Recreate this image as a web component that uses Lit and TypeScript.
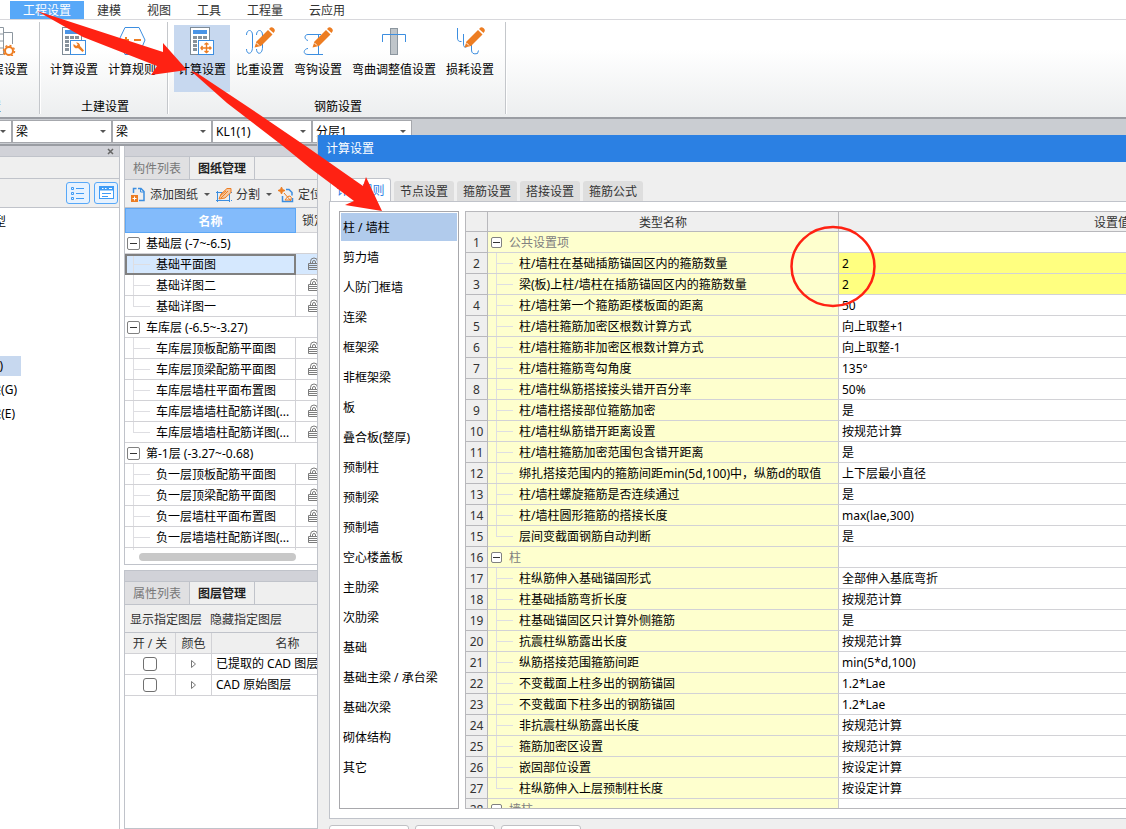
import { LitElement, html, css, svg } from "lit";
import { customElement } from "lit/decorators.js";

const shared = css`
  * { box-sizing: border-box; }
  button, select, input { font: inherit; color: inherit; margin: 0; }
  button { border: 0; background: none; padding: 0; white-space: nowrap; cursor: pointer; }
  svg { display: block; flex: none; }
`;

const pencil = svg`<path d="M9.500 21.500l2-6L23 4l4.500 4.500L16 20z" fill="#ed7d22"/><path d="M24 3l1.500-1.500q1.500-.8 3.200.8t.8 3.200L28.500 7z" fill="#ed7d22"/><path d="M11.500 17l2.500 2.500" stroke="#fff"/>`;
const sheetCalc = (extra: unknown) => html`
  <svg width="28" height="30" viewBox="0 0 28 30" fill="none">
    <rect x="2.500" y="1.500" width="19" height="27" fill="#fff" stroke="#7e8b97"/>
    <rect x="5" y="4" width="14" height="4" fill="#4a94e6"/>
    <path d="M5 11.500h14M5 15.500h14M5 19.500h4M5 23.500h4" stroke="#86919b" stroke-width="3" stroke-dasharray="4 1"/>
    <rect x="10.500" y="14.500" width="15" height="14" fill="#fff" stroke="#3c8ee0"/>
    ${extra}
  </svg>`;
const wrench = svg`<path d="M13.500 18a3.300 3.300 0 0 0 4.500 4l4.500 4 1.500-1.500-4-4.500a3.300 3.300 0 0 0-4-3.500l1.800 2-1.500 1.500z" fill="#ed7d22"/>`;
const cross = svg`<path d="M18.500 17.500v8.500M13.500 22h9M16.500 18.500l2-1.500 2 1.500M14.500 20l-1.500 2 1.500 2M21.500 20.500l1.500 1.500-1.500 1.500M16.500 25l2 1.500 2-1.500" stroke="#ed7d22" stroke-width="1.400"/>`;

const icons: Record<string, unknown> = {
  floor: html`<svg width="28" height="30" viewBox="0 0 28 30" fill="none">
    <path d="M0 1.500h13.500v27H0M0 8h13M0 15h13M0 22h13M13.500 6.500h9V18" stroke="#8c969f"/>
    <circle cx="19" cy="25" r="4" fill="#fff" stroke="#ed7d22" stroke-width="2"/>
    <circle cx="19" cy="25" r="5.500" stroke="#ed7d22" stroke-width="1.500" stroke-dasharray="2 2.300"/></svg>`,
  calc: sheetCalc(wrench),
  calcCross: sheetCalc(cross),
  rule: html`<svg width="28" height="30" viewBox="0 0 28 30" fill="none">
    <path d="M7 1.500h14l6 12.500-6 14.500H7L1 14z" stroke="#3c8ee0" fill="#fff"/>
    <path d="M5 14h6M8 11v6M16 14h7" stroke="#ed7d22" stroke-width="2"/></svg>`,
  weight: html`<svg width="30" height="30" viewBox="0 0 30 30" fill="none">
    <path d="M1.500 9c0-6 6-6 6 0v12c0 8-6 8-6 2M11.500 9c0-6 6-6 6 0v12c0 8-6 8-6 2" stroke="#3c8ee0"/>${pencil}</svg>`,
  hook: html`<svg width="30" height="30" viewBox="0 0 30 30" fill="none">
    <path d="M18 8.500H5c-4 0-4 5 0 6M18 28.500H5c-6 0-4-6 0-6M15.500 9v19M12 28.500h8" stroke="#3c8ee0"/>${pencil}</svg>`,
  bend: html`<svg width="28" height="30" viewBox="0 0 28 30" fill="none">
    <rect x="10.500" y="2.500" width="7" height="26" fill="#bfc5ca" stroke="#8c969f"/>
    <path d="M2.500 16V8.500h23V16" stroke="#3c8ee0"/></svg>`,
  loss: html`<svg width="30" height="30" viewBox="0 0 30 30" fill="none">
    <path d="M2.500 2v10q0 4 4 3.500M8.500 8v10q0 4 3 3M16.500 15v9q0 5 6 3.500l1-3" stroke="#3c8ee0"/>${pencil}</svg>`,
};

interface Tool { label: string; icon: string; on?: boolean }
const ribbon: { name: string; tools: Tool[] }[] = [
  { name: "工程设置", tools: [{ label: "楼层设置", icon: "floor" }] },
  { name: "土建设置", tools: [{ label: "计算设置", icon: "calc" }, { label: "计算规则", icon: "rule" }] },
  { name: "钢筋设置", tools: [
    { label: "计算设置", icon: "calcCross", on: true },
    { label: "比重设置", icon: "weight" },
    { label: "弯钩设置", icon: "hook" },
    { label: "弯曲调整值设置", icon: "bend" },
    { label: "损耗设置", icon: "loss" },
  ] },
];

@customElement("app-ribbon")
export class AppRibbon extends LitElement {
  static styles = [shared, css`
    :host { display: block; }
    .tabs { display: flex; height: 20px; padding: 1px 0 0 10px; border-bottom: 1px solid #d8d8dc; }
    .tab { padding: 2px 13px 0; height: 18px; line-height: 16px; color: #333; }
    .tab.on { background: #57a8f8; color: #fff; }
    .groups { display: flex; height: 99px; background: linear-gradient(#fff 30%, #eceeef); border-bottom: 2px solid #9a9da3; overflow: hidden; }
    .group { display: flex; flex-direction: column; align-items: center; gap: 6px; margin: 2px 1px 3px 0; padding: 3px 7px 0 5px; border-right: 1px solid #c4c7cb; box-shadow: 1px 0 #fff; }
    .group:first-child { width: 40px; padding: 3px 7px 0 0; align-items: flex-end; }
    .group:first-child .name { padding-right: 31px; }
    .tools { display: flex; gap: 2px; }
    .tool { display: flex; flex-direction: column; align-items: center; height: 67px; padding: 1px 4px; color: #000; }
    .tool.on { background: #c7d8ef; }
    .label { line-height: 20px; margin-top: 4px; }
    .name { line-height: 18px; white-space: nowrap; padding-left: 4px; }
  `];
  render() {
    return html`
      <nav class="tabs">
        ${["工程设置", "建模", "视图", "工具", "工程量", "云应用"].map((t, i) =>
          html`<button class="tab ${i ? "" : "on"}">${t}</button>`)}
      </nav>
      <div class="groups">
        ${ribbon.map(g => html`<section class="group">
          <div class="tools">${g.tools.map(t => html`
            <button class="tool ${t.on ? "on" : ""}">${icons[t.icon]}<span class="label">${t.label}</span></button>`)}
          </div>
          <span class="name">${g.name}</span>
        </section>`)}
      </div>`;
  }
}

const addIcon = html`<svg width="16" height="16" viewBox="0 0 16 16" fill="none">
  <path d="M3.500 6V1.500h3M8 1.500h3l3 3v9H9" stroke="#3c8ee0" stroke-width="1.500"/><path d="M10.500 1v4H14" stroke="#3c8ee0"/>
  <rect x="1" y="8" width="7" height="7" fill="#ed7d22"/><path d="M4.500 9.500v4M2.500 11.500h4" stroke="#fff"/></svg>`;
const splitIcon = html`<svg width="16" height="16" viewBox="0 0 16 16" fill="none">
  <path d="M1.500 5.500h12v8h-12z" stroke="#3c8ee0"/><path d="M0 5.500h16M0 13.500h16M1.500 4v11M13.500 4v11" stroke="#3c8ee0" stroke-dasharray="2 1"/>
  <path d="M3 12l2-5 6-5.500h4v4L9 11z" fill="#f6c8a0" stroke="#ed7d22"/><path d="M5 11l7-7M4 9l6-5" stroke="#ed7d22"/></svg>`;
const locateIcon = html`<svg width="16" height="16" viewBox="0 0 16 16" fill="none">
  <path d="M8 2.500h3l3 3v3M4.500 9v5.500h10V11" stroke="#3c8ee0" stroke-width="1.500"/>
  <path d="M3.500 0l1 2.500L7 3.500l-2.500 1-1 2.500-1-2.500L0 3.500l2.500-1z" fill="#ed7d22" stroke="#ed7d22"/><path d="M6 6l7 8M7 13q3-5 5-4t1 4H7" stroke="#ed7d22"/></svg>`;
const lockIcon = html`<svg width="12" height="14" viewBox="0 0 12 14" fill="none" stroke="#7c7c7c">
  <path d="M2.500 6V4.500a3.500 3.500 0 0 1 7 0V6M4.500 6V5a1.500 1.500 0 0 1 3 0v1M.500 6.500h11v6H.500zM1 8.500h10M1 10.500h10"/></svg>`;

const drawings = [
  { name: "基础层 (-7~-6.5)", items: ["基础平面图", "基础详图二", "基础详图一"] },
  { name: "车库层 (-6.5~-3.27)", items: ["车库层顶板配筋平面图", "车库层顶梁配筋平面图", "车库层墙柱平面布置图", "车库层墙墙柱配筋详图(...", "车库层墙墙柱配筋详图(..."] },
  { name: "第-1层 (-3.27~-0.68)", items: ["负一层顶板配筋平面图", "负一层顶梁配筋平面图", "负一层墙柱平面布置图", "负一层墙墙柱配筋详图(...", "负一层墙墙柱配筋详图(..."] },
];

const tree = css`
  .box { width: 13px; height: 13px; border: 1px solid #808080; border-radius: 2px; background: linear-gradient(#333, #333) center / 7px 1px no-repeat #fff; flex: none; }
  .twig { align-self: stretch; flex: none; width: 17px; background:
    linear-gradient(#dedee2, #dedee2) 0 0 / 1px 100% no-repeat,
    linear-gradient(#dedee2, #dedee2) 0 10px / 17px 1px no-repeat; }
  .twig.end { background-size: 1px 11px, 17px 1px; }
  .txt { padding-top: 1px; }
`;

@customElement("drawing-dock")
export class DrawingDock extends LitElement {
  static styles = [shared, tree, css`
    :host { display: flex; flex-direction: column; gap: 5px; width: 240px; flex: none; }
    .pane { border-left: 1px solid #c0c3ca; border-bottom: 1px solid #c0c3ca; background: #fff; }
    .pane.rest { flex: 1; border-top: 1px solid #c0c3ca; }
    .grip { height: 11px; background: #d1d2d8; border-bottom: 1px solid #c0c3ca; }
    .tabs { display: flex; height: 23px; background: #efefef; border-bottom: 1px solid #c0c3ca; }
    .tab { width: 65px; color: #777; background: #e0e0e2; border-right: 1px solid #c0c3ca; line-height: 22px; padding-top: 1px; }
    .tab.on { background: #efefef; color: #222; font-weight: 600; }
    .bar { display: flex; align-items: center; height: 28px; background: #efefef; gap: 4px; padding: 2px 5px 0; color: #333; border-bottom: 1px solid #c0c3ca; }
    .act { display: flex; align-items: center; gap: 4px; }
    .act::after { content: ""; border: 3px solid transparent; border-top-color: #555; border-bottom: 0; margin: 0 2px 0 2px; }
    .text { padding-right: 4px; }
    table { border-collapse: separate; border-spacing: 0; table-layout: fixed; width: 100%; }
    th, td { height: 21px; padding: 0; border-right: 1px solid #d2d2d6; border-bottom: 1px solid #d2d2d6; white-space: nowrap; overflow: hidden; }
    th { padding-top: 2px; font-weight: 400; background: #efefef; color: #333; }
    .list { height: 342px; overflow: hidden; }
    .list th { height: 25px; padding-left: 6px; text-align: left; }
    .list th.main { background: #83bbfb; border: 1px solid #5da7f5; color: #fff; font-weight: 600; text-align: center; padding: 2px 0 0; }
    .head { display: flex; align-items: center; gap: 6px; padding-left: 2px; }
    .leaf { display: flex; align-items: center; height: 20px; padding-left: 8px; }
    .leaf .twig { margin-right: 6px; }
    .lock { padding-left: 12px; }
    .sel td { background: #d5e8fe; }
    .sel .cell { outline: 2px solid #808080; outline-offset: -2px; }
    .scroll { height: 14px; padding: 3px 0 0 14px; }
    .thumb { width: 157px; height: 8px; border-radius: 4px; background: #c8c8c8; }
    .layers .name { padding-left: 4px; }
    .layers td { text-align: center; }
    .layers td.name { text-align: left; }
    .check { appearance: none; display: block; width: 14px; height: 14px; margin: 0 auto; border: 1px solid #707070; border-radius: 3px; background: #fff; }
    .open { display: block; margin: 0 auto; }
  `];
  render() {
    return html`
      <section class="pane">
        <div class="grip"></div>
        <div class="tabs"><button class="tab">构件列表</button><button class="tab on">图纸管理</button></div>
        <div class="bar">
          <button class="act">${addIcon}添加图纸</button>
          <button class="act">${splitIcon}分割</button>
          <button class="act">${locateIcon}定位</button>
        </div>
        <div class="list">
          <table>
            <colgroup><col style="width:171px"><col></colgroup>
            <thead><tr><th class="main">名称</th><th>锁定</th></tr></thead>
            <tbody>${drawings.map((g, gi) => html`
              <tr><td colspan="2"><div class="head"><span class="box"></span><span class="txt">${g.name}</span></div></td></tr>
              ${g.items.map((n, i) => html`<tr class=${gi + i ? "" : "sel"}>
                <td class="cell"><div class="leaf"><span class="twig ${i === g.items.length - 1 ? "end" : ""}"></span><span class="txt">${n}</span></div></td>
                <td class="lock">${lockIcon}</td></tr>`)}`)}
            </tbody>
          </table>
        </div>
        <div class="scroll"><div class="thumb"></div></div>
      </section>
      <section class="pane rest">
        <div class="grip"></div>
        <div class="tabs"><button class="tab">属性列表</button><button class="tab on">图层管理</button></div>
        <div class="bar"><button class="text">显示指定图层</button><button class="text">隐藏指定图层</button></div>
        <table class="layers">
          <colgroup><col style="width:51px"><col style="width:36px"><col></colgroup>
          <thead><tr><th>开 / 关</th><th>颜色</th><th>名称</th></tr></thead>
          <tbody>${["已提取的 CAD 图层", "CAD 原始图层"].map(n => html`<tr>
            <td><input class="check" type="checkbox" aria-label=${n}></td>
            <td><svg class="open" width="7" height="8" viewBox="0 0 7 8" fill="none"><path d="M1.500 .5v7l4-3.500z" stroke="#777"/></svg></td>
            <td class="name">${n}</td></tr>`)}</tbody>
        </table>
      </section>`;
  }
}

const cats = ["柱 / 墙柱", "剪力墙", "人防门框墙", "连梁", "框架梁", "非框架梁", "板", "叠合板(整厚)", "预制柱", "预制梁", "预制墙", "空心楼盖板", "主肋梁", "次肋梁", "基础", "基础主梁 / 承台梁", "基础次梁", "砌体结构", "其它"];

type Row = [string, string?, boolean?];
const rows: Row[] = [
  ["公共设置项"],
  ["柱/墙柱在基础插筋锚固区内的箍筋数量", "2", true],
  ["梁(板)上柱/墙柱在插筋锚固区内的箍筋数量", "2", true],
  ["柱/墙柱第一个箍筋距楼板面的距离", "50"],
  ["柱/墙柱箍筋加密区根数计算方式", "向上取整+1"],
  ["柱/墙柱箍筋非加密区根数计算方式", "向上取整-1"],
  ["柱/墙柱箍筋弯勾角度", "135°"],
  ["柱/墙柱纵筋搭接接头错开百分率", "50%"],
  ["柱/墙柱搭接部位箍筋加密", "是"],
  ["柱/墙柱纵筋错开距离设置", "按规范计算"],
  ["柱/墙柱箍筋加密范围包含错开距离", "是"],
  ["绑扎搭接范围内的箍筋间距min(5d,100)中，纵筋d的取值", "上下层最小直径"],
  ["柱/墙柱螺旋箍筋是否连续通过", "是"],
  ["柱/墙柱圆形箍筋的搭接长度", "max(lae,300)"],
  ["层间变截面钢筋自动判断", "是"],
  ["柱"],
  ["柱纵筋伸入基础锚固形式", "全部伸入基底弯折"],
  ["柱基础插筋弯折长度", "按规范计算"],
  ["柱基础锚固区只计算外侧箍筋", "是"],
  ["抗震柱纵筋露出长度", "按规范计算"],
  ["纵筋搭接范围箍筋间距", "min(5*d,100)"],
  ["不变截面上柱多出的钢筋锚固", "1.2*Lae"],
  ["不变截面下柱多出的钢筋锚固", "1.2*Lae"],
  ["非抗震柱纵筋露出长度", "按规范计算"],
  ["箍筋加密区设置", "按规范计算"],
  ["嵌固部位设置", "按设定计算"],
  ["柱纵筋伸入上层预制柱长度", "按设定计算"],
  ["墙柱"],
];

@customElement("calc-dialog")
export class CalcDialog extends LitElement {
  static styles = [shared, tree, css`
    :host { display: flex; flex-direction: column; background: #efefef; border-left: 1px solid #c0c3ca; }
    .title { margin: 0; height: 27px; line-height: 27px; padding-left: 8px; font-size: 12px; font-weight: 400; background: #2b80e3; color: #fff; }
    .tabs { display: flex; align-items: flex-end; gap: 3px; padding: 16px 0 0 12px; }
    .tab { width: 60px; height: 20px; padding-top: 2px; background: #dedede; color: #333; border-radius: 3px 3px 0 0; }
    .tab.on { width: 61px; height: 24px; margin-bottom: -1px; padding-top: 0; background: #fff; color: #2b80e3; border: 1px solid #c0c3ca; border-bottom: 0; }
    .page { display: flex; gap: 6px; margin-left: 11px; padding: 9px; height: 618px; background: #fff; border: 1px solid #c0c3ca; }
    .cats { flex: none; width: 120px; margin: 0; padding: 1px; list-style: none; border: 1px solid #a8a8ac; overflow: hidden; }
    .cat { display: block; width: 100%; height: 28px; margin-bottom: 2px; padding: 2px 0 0 2px; text-align: left; color: #000; }
    .cat.on { background: #b1cbec; }
    .sheet { flex: 1; overflow: hidden; border: 1px solid #b8b8bc; }
    table { width: 100%; border-collapse: separate; border-spacing: 0; table-layout: fixed; }
    th, td { height: 21px; padding: 2px 0 0; border-right: 1px solid #c8c8cc; border-bottom: 1px solid #d2d2d6; white-space: nowrap; }
    th { height: 20px; font-weight: 400; color: #333; background: #efefef; border-color: #b8b8bc; }
    tbody th { height: 21px; }
    .key { padding: 0; background: #feffce; }
    .val { padding-left: 3px; }
    .mark { background: #ffff80; }
    .head { display: flex; align-items: center; gap: 6px; padding-left: 3px; color: #808080; }
    .head .box { width: 11px; height: 11px; margin-right: 1px; }
    .txt { padding-top: 2px; }
    .leaf { display: flex; align-items: center; height: 20px; padding-left: 8px; }
    .leaf .twig { margin-right: 6px; }
    .foot { display: flex; gap: 6px; padding: 6px 11px; }
    .btn { width: 80px; height: 24px; background: #fff; border: 1px solid #c0c0c4; border-radius: 3px; }
  `];
  render() {
    return html`
      <h2 class="title">计算设置</h2>
      <nav class="tabs">${["计算规则", "节点设置", "箍筋设置", "搭接设置", "箍筋公式"].map((t, i) =>
        html`<button class="tab ${i ? "" : "on"}">${t}</button>`)}</nav>
      <div class="page">
        <ul class="cats">${cats.map((c, i) => html`<li><button class="cat ${i ? "" : "on"}">${c}</button></li>`)}</ul>
        <div class="sheet"><table>
          <colgroup><col style="width:22px"><col style="width:351px"><col></colgroup>
          <thead><tr><th></th><th>类型名称</th><th>设置值</th></tr></thead>
          <tbody>${rows.map(([k, v, m], i) => html`<tr>
            <th>${i + 1}</th>
            <td class="key">${v === undefined
              ? html`<div class="head"><span class="box"></span><span class="txt">${k}</span></div>`
              : html`<div class="leaf"><span class="twig ${rows[i + 1]?.[1] === undefined ? "end" : ""}"></span><span class="txt">${k}</span></div>`}</td>
            <td class="val ${m ? "mark" : ""}">${v ?? ""}</td></tr>`)}</tbody>
        </table></div>
      </div>
      <div class="foot"><button class="btn">导入规则</button><button class="btn">导出规则</button><button class="btn">恢复</button></div>`;
  }
}

@customElement("app-root")
export class AppRoot extends LitElement {
  static styles = [shared, css`
    :host { display: flex; flex-direction: column; position: relative; height: 100vh; overflow: hidden; background: #fff; color: #000; font: 12px/16px "Noto Sans", "Noto Sans CJK SC", sans-serif; }
    .combos { display: flex; height: 27px; padding: 1px 0; background: #cacdd2; border-bottom: 2px solid #9a9da3; flex: none; }
    .combo { display: grid; align-items: center; width: 100px; flex: none; }
    .combo:first-child { margin-left: -88px; }
    .combo select { grid-area: 1 / 1; appearance: none; width: 100%; height: 23px; padding: 0 3px; background: #fff; border: 1px solid #a6a8ad; border-radius: 0; }
    .combo::after { content: ""; grid-area: 1 / 1; justify-self: end; margin-right: 6px; border: 3px solid transparent; border-top-color: #555; border-bottom: 0; pointer-events: none; }
    .work { display: flex; flex: 1; min-height: 0; gap: 4px; }
    .nav { display: flex; flex-direction: column; width: 120px; flex: none; border-right: 1px solid #c0c3ca; }
    .strip { display: flex; justify-content: flex-end; align-items: center; height: 11px; padding-right: 5px; background: #d1d2d8; border-bottom: 1px solid #c0c3ca; }
    .blank { height: 22px; background: #efefef; border-bottom: 1px solid #c0c3ca; }
    .views { display: flex; justify-content: flex-end; align-items: center; gap: 4px; height: 29px; padding-right: 1px; background: #efefef; border-bottom: 1px solid #c0c3ca; }
    .view { display: grid; place-items: center; width: 24px; height: 22px; border: 1px solid #57a8f8; border-radius: 3px; background: #e6f2ff; }
    .clip { display: flex; justify-content: flex-end; align-items: center; overflow: hidden; height: 20px; margin-bottom: 4px; white-space: nowrap; width: 21px; padding-right: 4px; }
    .first { width: 10px; margin: 4px 0 124px; }
    .sel { background: #c7d8ef; padding-right: 18px; }
    .far { padding-right: 6px; }
    calc-dialog { position: absolute; left: 317px; top: 135px; bottom: 0; width: 1080px; overflow: hidden; }
    .marks { position: absolute; left: 0; top: 0; pointer-events: none; }
  `];
  render() {
    return html`
      <app-ribbon></app-ribbon>
      <div class="combos">
        ${[["首层", "楼层"], ["梁", "类别"], ["梁", "构件类型"], ["KL1(1)", "构件"], ["分层1", "分层"]].map(([v, l]) =>
          html`<label class="combo"><select aria-label=${l}><option>${v}</option></select></label>`)}
      </div>
      <div class="work">
        <aside class="nav">
          <div class="strip"><svg width="7" height="7" viewBox="0 0 7 7"><path d="M1 1l5 5M6 1L1 6" stroke="#666" stroke-width="1.500"/></svg></div>
          <div class="blank"></div>
          <div class="views">
            <button class="view" aria-label="列表"><svg width="14" height="14" viewBox="0 0 14 14" fill="none" stroke="#3f9bf5"><path d="M5 2.500h8M5 7.500h8M5 12.500h8M.500 1.500h2v2h-2zM.500 6.500h2v2h-2zM.500 11.500h2v2h-2z"/></svg></button>
            <button class="view" aria-label="面板"><svg width="15" height="14" viewBox="0 0 15 14" fill="none" stroke="#3f9bf5"><rect x=".5" y=".5" width="14" height="12" fill="#fff"/><path d="M1 1h13v3H1z" fill="#3f9bf5"/><path d="M3 2.500h1.500M6 2.500h1.500M10 2.500h3" stroke="#fff"/><path d="M3 7.500h9M3 10.500h6"/></svg></button>
          </div>
          <div class="clip first">常用构件类型</div>
          <div class="clip sel">梁(L)</div>
          <div class="clip">连梁(G)</div>
          <div class="clip far">圈梁(E)</div>
        </aside>
        <drawing-dock></drawing-dock>
      </div>
      <calc-dialog></calc-dialog>
      <svg class="marks" width="900" height="320" viewBox="0 0 900 320" fill="#ff2213">
        <path d="M37 11L163 52V43L187 70 151 75 157 66 83 37z"/>
        <path d="M191 71L197 73 260 115 310 149 363 186 366 177 382 211 345 205 354 201 310 168 283 146 227 103z"/>
        <ellipse cx="833" cy="266.500" rx="41.500" ry="39.500" fill="none" stroke="#ff2213" stroke-width="2.500"/>
      </svg>`;
  }
}
